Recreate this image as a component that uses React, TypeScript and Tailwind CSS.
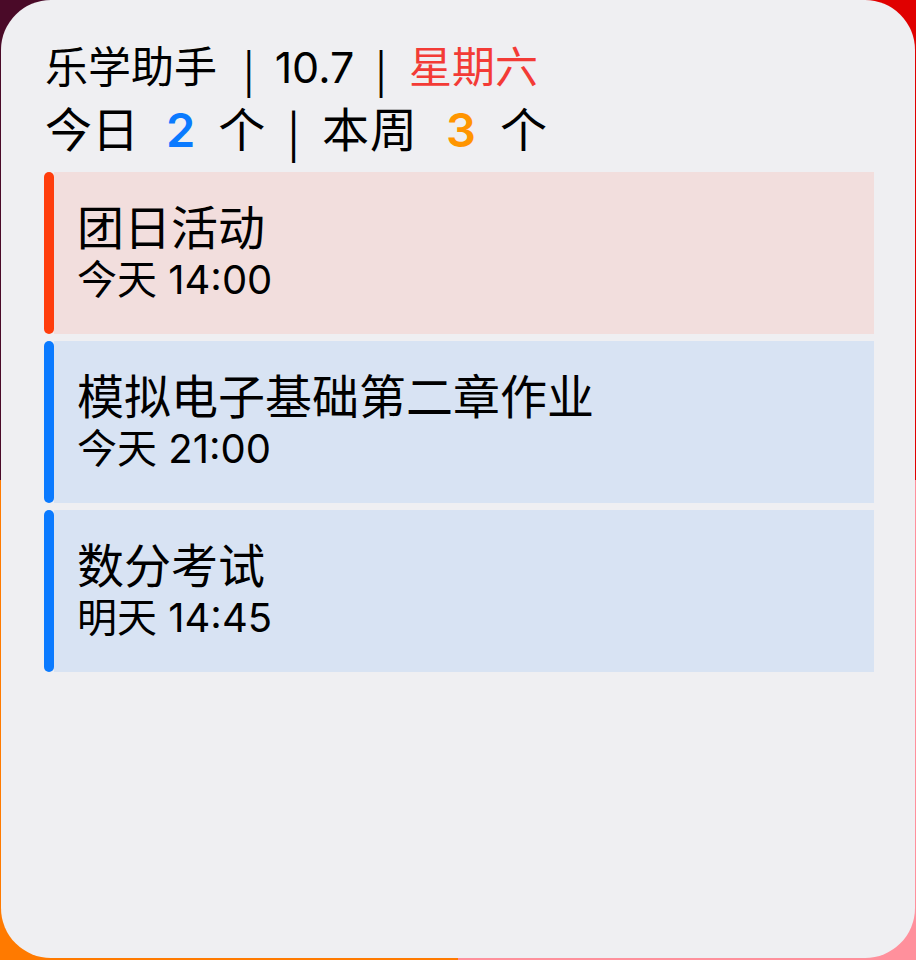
import React from "react";

const items = [
  { title: "团日活动", time: "今天 14:00", bar: "bg-[#ff3d0c]", bg: "bg-[#f2dedd]" },
  { title: "模拟电子基础第二章作业", time: "今天 21:00", bar: "bg-[#0a7aff]", bg: "bg-[#d8e3f3]" },
  { title: "数分考试", time: "明天 14:45", bar: "bg-[#0a7aff]", bg: "bg-[#d8e3f3]" },
];

function Pipe({ className = "" }: { className?: string }) {
  return <span className={`font-['Noto_Sans_CJK_SC',sans-serif] ${className}`}>|</span>;
}

export default function App() {
  return (
    <div className="w-[916px] h-[960px] overflow-hidden bg-[conic-gradient(from_0deg_at_50%_50%,#e00000_0deg_90deg,#ff909c_90deg_180deg,#ff7a00_180deg_270deg,#4a0a28_270deg_360deg)] font-['Inter','Noto_Sans_CJK_SC',sans-serif] text-black">
      <div className="ml-[1px] w-[914px] h-[958px] rounded-[50px] bg-[#efeff2] flex flex-col">
        <div className="pl-[44px] pt-[46px] flex items-center h-[42px] box-content text-[43px] leading-[42px]">
          <span>乐学助手</span>
          <Pipe className="ml-[26px]" />
          <span className="ml-[20px]">10.7</span>
          <Pipe className="ml-[21px]" />
          <span className="ml-[22px] text-[#f33b36]">星期六</span>
        </div>
        <div className="pl-[44px] mt-[17px] flex items-center h-[50px] text-[47px] leading-[50px]">
          <span>今日</span>
          <span className="ml-[27px] font-semibold text-[#0a7aff]">2</span>
          <span className="ml-[23px]">个</span>
          <Pipe className="ml-[22px]" />
          <span className="ml-[22px] tracking-[1px]">本周</span>
          <span className="ml-[28px] font-semibold text-[#ff9500]">3</span>
          <span className="ml-[24px]">个</span>
        </div>
        <div className="mt-[17px] pl-[43px] pr-[41px] flex flex-col gap-[7px]">
          {items.map((it) => (
            <div key={it.title} className="flex h-[162px]">
              <div className={`w-[10px] rounded-full ${it.bar}`} />
              <div className={`flex-1 ${it.bg} pl-[23px] pt-[30px] flex flex-col`}>
                <div className="text-[47px] leading-[52px]">{it.title}</div>
                <div className="mt-[3px] text-[40px] leading-[46px]">{it.time}</div>
              </div>
            </div>
          ))}
        </div>
      </div>
    </div>
  );
}
